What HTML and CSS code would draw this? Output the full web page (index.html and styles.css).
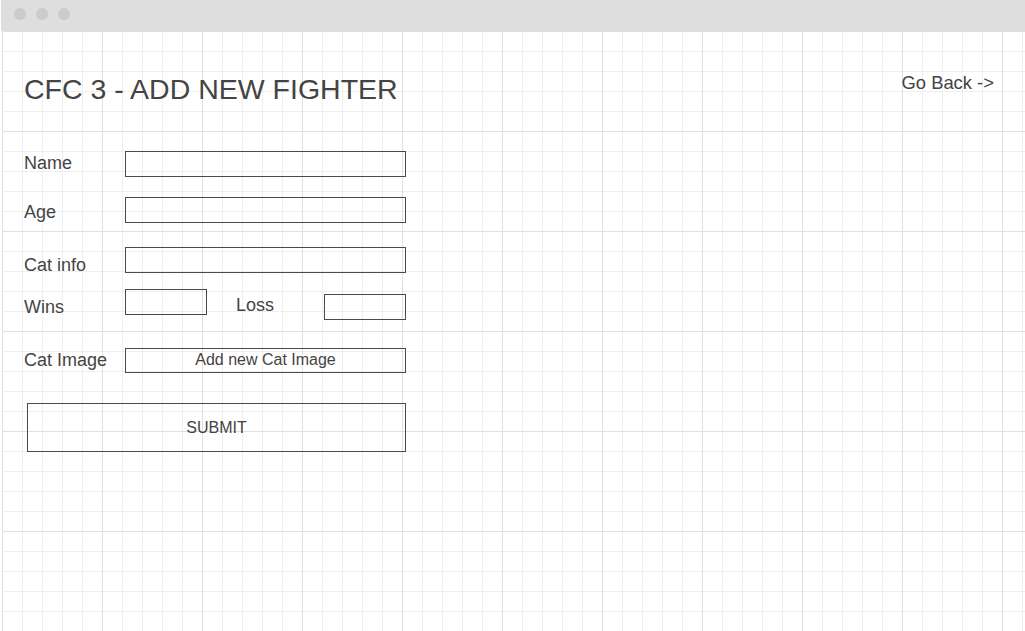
FILE: index.html
```html
<!DOCTYPE html>
<html lang="en">
<head>
<meta charset="utf-8">
<title>CFC 3 - Add New Fighter</title>
<link rel="stylesheet" href="styles.css">
</head>
<body>
<div class="window">
  <div class="titlebar">
    <span class="dot"></span>
    <span class="dot"></span>
    <span class="dot"></span>
  </div>
  <div class="canvas">
    <header class="header">
      <h1 class="title">CFC 3 - ADD NEW FIGHTER</h1>
      <a class="back" href="#">Go Back -&gt;</a>
    </header>
    <form class="form">
      <div class="row row-name">
        <label class="label label-name">Name</label>
        <div class="field"></div>
      </div>
      <div class="row row-age">
        <label class="label label-age">Age</label>
        <div class="field"></div>
      </div>
      <div class="row row-info">
        <label class="label label-info">Cat info</label>
        <div class="field"></div>
      </div>
      <div class="row row-score">
        <label class="label label-wins">Wins</label>
        <div class="field field-small"></div>
        <label class="label label-loss">Loss</label>
        <div class="field field-small field-loss"></div>
      </div>
      <div class="row row-image">
        <label class="label label-image">Cat Image</label>
        <div class="field field-button">Add new Cat Image</div>
      </div>
      <div class="submit">SUBMIT</div>
    </form>
  </div>
</div>
</body>
</html>
```

FILE: styles.css
```css
html, body {
  margin: 0;
  padding: 0;
  background: #ffffff;
}

body {
  font-family: "Liberation Sans", Arial, sans-serif;
  color: #444444;
  width: 1025px;
  height: 631px;
  overflow: hidden;
}

.window {
  margin-left: 1px;
  height: 631px;
  display: flex;
  flex-direction: column;
}

.titlebar {
  height: 31px;
  flex: none;
  background: #dedede;
  display: flex;
  align-items: center;
  gap: 10px;
  padding-left: 13px;
  padding-bottom: 3px;
  box-sizing: border-box;
}

.dot {
  width: 12px;
  height: 12px;
  border-radius: 50%;
  background: #cbcbcb;
}

.canvas {
  flex: 1;
  margin-left: 1px;
  background-color: #ffffff;
  background-image:
    linear-gradient(to right, #dfdfdf 1px, transparent 1px),
    linear-gradient(to bottom, #dfdfdf 1px, transparent 1px),
    linear-gradient(to right, #efefef 1px, transparent 1px),
    linear-gradient(to bottom, #efefef 1px, transparent 1px);
  background-size: 100px 100px, 100px 100px, 20px 20px, 20px 20px;
  background-position: 0 0, 0 0, 0 0, 0 0;
}

.header {
  display: flex;
  justify-content: space-between;
  align-items: flex-start;
  height: 32px;
  padding: 42px 31px 0 22px;
}

.title {
  margin: 0;
  font-size: 28.5px;
  line-height: 32px;
  font-weight: normal;
  color: #444444;
}

.back {
  font-size: 18.4px;
  line-height: 20px;
  color: #444444;
  text-decoration: none;
}

.form {
  display: flex;
  flex-direction: column;
  padding-left: 22px;
}

.row {
  display: flex;
  align-items: flex-start;
  flex: none;
}

.row-name { margin-top: 46px; height: 26px; }
.row-age { margin-top: 20px; height: 26px; }
.row-info { margin-top: 24px; height: 26px; }
.row-score { margin-top: 16px; height: 31px; width: 382px; }
.row-image { margin-top: 28px; height: 25px; }

.label {
  width: 101px;
  flex: none;
  font-size: 18px;
  line-height: 20px;
  color: #444444;
}

.label-name { margin-top: 2px; }
.label-age { margin-top: 5px; }
.label-info { margin-top: 8px; }
.label-wins { margin-top: 8px; }
.label-image { margin-top: 2px; }

.label-loss {
  width: auto;
  margin-left: 29px;
  margin-top: 6px;
}

.field {
  width: 281px;
  height: 26px;
  box-sizing: border-box;
  border: 1px solid #4a4a4a;
  background: transparent;
  flex: none;
}

.field-small {
  width: 82px;
}

.field-loss {
  margin-top: 5px;
  margin-left: auto;
}

.field-button {
  height: 25px;
  font-size: 16px;
  line-height: 22px;
  text-align: center;
  color: #444444;
}

.submit {
  margin-top: 30px;
  margin-left: 3px;
  width: 379px;
  height: 49px;
  box-sizing: border-box;
  border: 1px solid #4a4a4a;
  font-size: 16px;
  line-height: 47px;
  text-align: center;
  color: #444444;
}
```
